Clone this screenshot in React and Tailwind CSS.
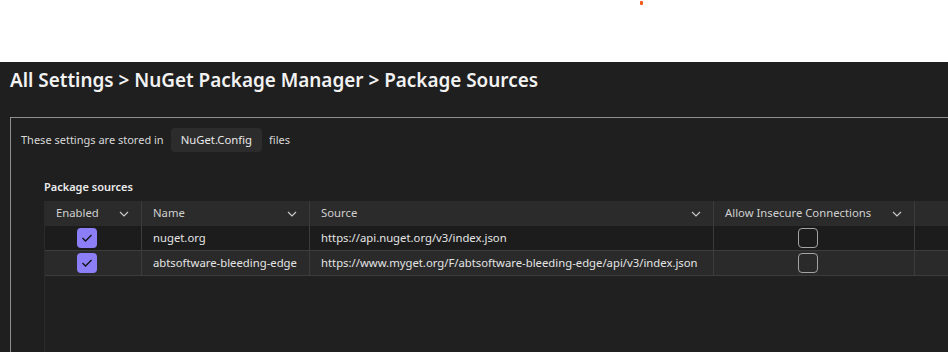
import React from 'react';

const font = { fontFamily: '"Noto Sans", "Open Sans", sans-serif' };

function Chevron() {
  return (
    <svg width="10" height="6" viewBox="0 0 10 6" className="shrink-0">
      <path d="M1 1 L5 5 L9 1" fill="none" stroke="#c8c8c8" strokeWidth="1.2" />
    </svg>
  );
}

function Checked() {
  return (
    <div className="w-[20px] h-[20px] rounded-[4px] bg-[#8b7ef7] flex items-center justify-center">
      <svg width="12" height="10" viewBox="0 0 12 10">
        <path d="M1.5 5 L4.5 8 L10.5 2" fill="none" stroke="#111" strokeWidth="1.3" />
      </svg>
    </div>
  );
}

function Unchecked() {
  return <div className="w-[20px] h-[20px] rounded-[4px] border-[1.5px] border-[#a3a3a3]" />;
}

const cols = 'grid grid-cols-[97px_168px_404px_201px_1fr]';

function HeaderCell({ label, last }) {
  return (
    <div className={`flex items-center justify-between pl-[11px] pr-[12px] ${last ? '' : 'border-r border-[#3c3c3c]'}`}>
      <span>{label}</span>
      <Chevron />
    </div>
  );
}

function Row({ name, source, odd }) {
  return (
    <div className={`${cols} h-[25px] border-b border-[#3c3c3c] whitespace-nowrap ${odd ? 'bg-[#2a2a2a]' : 'bg-[#1c1c1c]'} text-[#e4e4e4]`}>
      <div className="flex items-center justify-center border-r border-[#3c3c3c] pr-[13px]">
        <Checked />
      </div>
      <div className="flex items-center pl-[11px] border-r border-[#3c3c3c]">{name}</div>
      <div className="flex items-center pl-[11px] border-r border-[#3c3c3c]">{source}</div>
      <div className="flex items-center justify-center border-r border-[#3c3c3c] pr-[13px]">
        <Unchecked />
      </div>
      <div />
    </div>
  );
}

export default function App() {
  return (
    <div className="w-[948px] h-[352px] overflow-hidden flex flex-col text-[11.3px]" style={font}>
      <div className="h-[62px] bg-white relative shrink-0">
        <div className="absolute left-[640px] top-[1px] w-[3px] h-[4px] rounded-[1px] bg-[#f25a1a]" />
      </div>

      <div className="flex-1 bg-[#1f1f1f] flex flex-col pl-[10px]">
        <h1 className="pt-[4px] text-[18.9px] leading-[28px] font-semibold text-[#f2f2f2] whitespace-nowrap">
          All Settings &gt; NuGet Package Manager &gt; Package Sources
        </h1>

        <div className="mt-[23px] flex-1 border-l border-t border-[#8f8f8f] pl-[10px] pt-[10px] flex flex-col">
          <div className="flex items-center h-[24px] text-[11px] text-[#d8d8d8] whitespace-nowrap">
            <span>These settings are stored in</span>
            <span className="ml-[7px] h-[24px] px-[10px] rounded-[4px] bg-[#2c2c2c] flex items-center text-[11.3px] text-[#e8e8e8]">
              NuGet.Config
            </span>
            <span className="ml-[7px]">files</span>
          </div>

          <div className="ml-[23px] mt-[27px] flex-1 flex flex-col">
            <div className="h-[16px] leading-[16px] font-semibold text-[11px] text-[#ececec]">Package sources</div>
            <div className="mt-[6px] flex-1 flex flex-col border-l border-[#2a2a2a] bg-[#202020]">
              <div className={`${cols} h-[25px] bg-[#2b2b2b] text-[#d0d0d0] whitespace-nowrap`}>
                <HeaderCell label="Enabled" />
                <HeaderCell label="Name" />
                <HeaderCell label="Source" />
                <HeaderCell label="Allow Insecure Connections" />
                <div />
              </div>
              <Row name="nuget.org" source="https://api.nuget.org/v3/index.json" />
              <Row
                name="abtsoftware-bleeding-edge"
                source="https://www.myget.org/F/abtsoftware-bleeding-edge/api/v3/index.json"
                odd
              />
            </div>
          </div>
        </div>
      </div>
    </div>
  );
}
